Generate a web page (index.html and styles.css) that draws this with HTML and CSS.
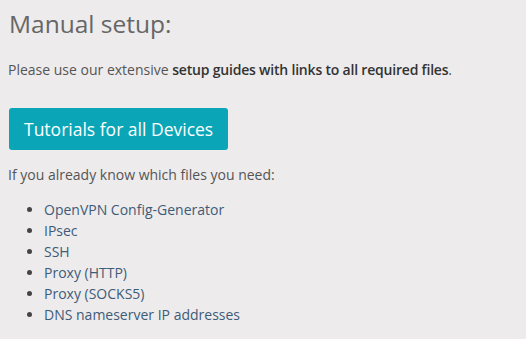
FILE: index.html
```html
<!DOCTYPE html>
<html lang="en">
<head>
    <meta charset="UTF-8">
    <title>Manual setup</title>
    <link rel="stylesheet" href="styles.css">
</head>
<body>
<h2 class="title">Manual setup:</h2>
<p class="intro">Please use our extensive <strong>setup guides with links to all required files</strong>.</p>
<a class="button" href="#">Tutorials for all Devices</a>
<p class="hint">If you already know which files you need:</p>
<ul class="files">
    <li><a href="#">OpenVPN Config-Generator</a></li>
    <li><a href="#">IPsec</a></li>
    <li><a href="#">SSH</a></li>
    <li><a href="#">Proxy (HTTP)</a></li>
    <li><a href="#">Proxy (SOCKS5)</a></li>
    <li><a href="#">DNS nameserver IP addresses</a></li>
</ul>
</body>
</html>
```

FILE: styles.css
```css
body {
    margin: 0;
    padding: 0 8px;
    font-family: "Open Sans", sans-serif;
    background-color: #edebec;
    color: #444;
}

.title {
    margin: 8px 0 0 1px;
    font-size: 24.5px;
    font-weight: normal;
    line-height: 32px;
    color: #666;
}

.intro {
    margin: 20px 0 0;
    font-size: 14px;
    line-height: 20px;
    color: #555;
}

.intro strong {
    font-weight: 600;
    letter-spacing: -0.2px;
    color: #333;
}

.button {
    display: inline-block;
    margin: 28px 0 0 1px;
    padding: 0 15px;
    height: 42px;
    line-height: 42px;
    font-size: 17.5px;
    color: #fff;
    text-decoration: none;
    background-color: #0aa6b8;
    border-radius: 3px;
}

.hint {
    margin: 15px 0 0;
    font-size: 14px;
    line-height: 20px;
    color: #555;
}

.files {
    margin: 14px 0 0;
    padding-left: 36px;
    font-size: 14px;
    line-height: 21px;
}

.files a {
    color: #3e5b78;
    text-decoration: none;
}
```
